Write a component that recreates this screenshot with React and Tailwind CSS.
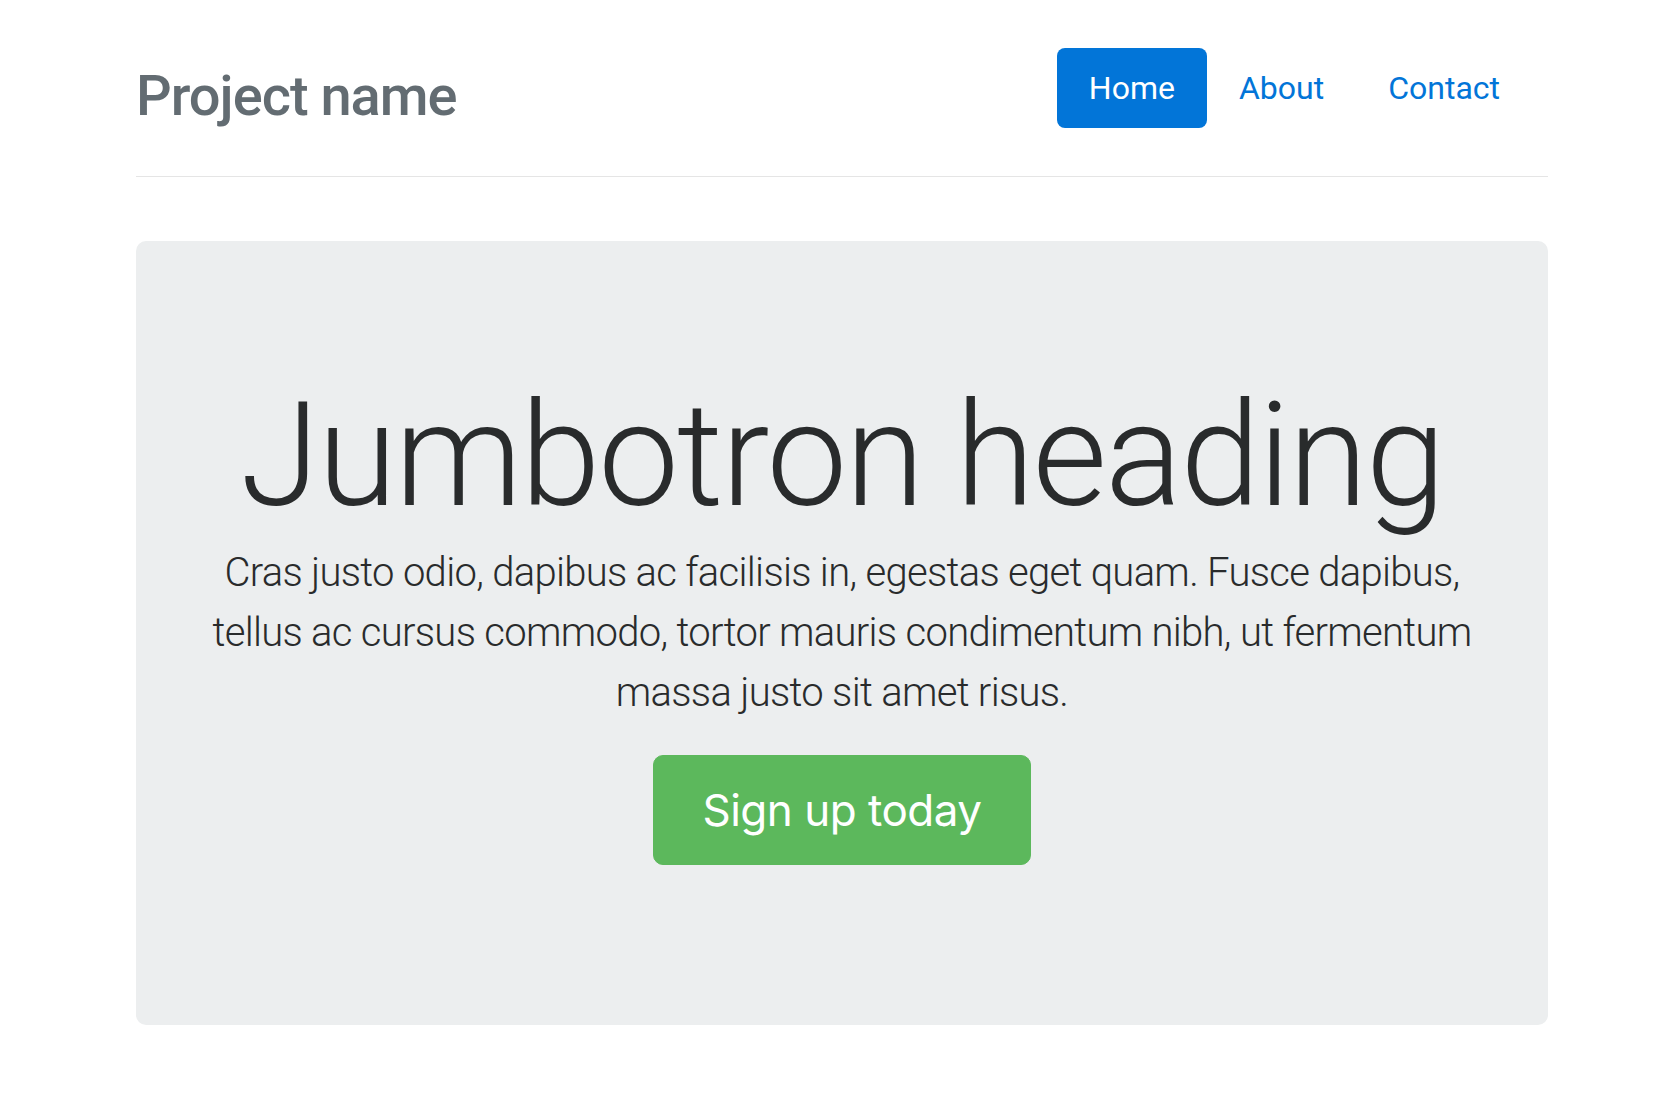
import React from "react";

function App() {
  const links = ["Home", "About", "Contact"];

  return (
    <div
      className="min-h-screen bg-white pt-12 text-[#292b2c]"
      style={{ fontFamily: "Roboto, 'Liberation Sans', sans-serif" }}
    >
      <div className="ml-[136px] w-[1412px]">
        <div className="flex items-start justify-between border-b border-[#e5e5e5] pb-8 pr-4">
          <h3 className="text-[56px] font-medium leading-[96px] tracking-[-1px] text-[#636c72]">
            Project name
          </h3>
          <nav className="flex">
            {links.map((link, index) => (
              <a
                key={link}
                href="#"
                className={
                  index === 0
                    ? "rounded-lg bg-[#0275d8] px-8 py-4 text-[32px] leading-[48px] text-white"
                    : "rounded-lg px-8 py-4 text-[32px] leading-[48px] text-[#0275d8]"
                }
              >
                {link}
              </a>
            ))}
          </nav>
        </div>

        <div className="mt-16 rounded-[10px] bg-[#eceeef] px-16 py-32 text-center">
          <h1 className="mb-2 pt-2 text-[144px] font-light leading-[1.1] tracking-[-2px]">
            Jumbotron heading
          </h1>
          <p className="mb-8 text-[40px] font-light leading-[60px] tracking-[-0.7px]">
            Cras justo odio, dapibus ac facilisis in, egestas eget quam. Fusce
            dapibus, tellus ac cursus commodo, tortor mauris condimentum nibh,
            ut fermentum massa justo sit amet risus.
          </p>
          <p className="mb-8">
            <a
              href="#"
              className="inline-block rounded-[10px] border border-[#5cb85c] bg-[#5cb85c] px-12 py-6 text-[44px] leading-[60px] tracking-[-0.5px] text-white"
              style={{ fontFamily: "Inter, Roboto, sans-serif" }}
            >
              Sign up today
            </a>
          </p>
        </div>
      </div>
    </div>
  );
}

export default App;
